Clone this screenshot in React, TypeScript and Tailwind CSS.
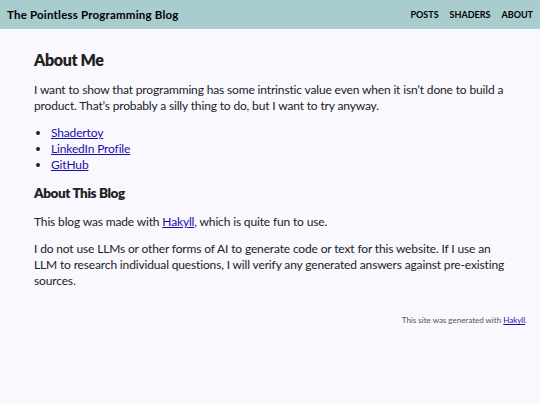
export default function App() {
  return (
    <div className="min-h-[405px] bg-[#f8f8fe] text-[#222] font-['Lato','Noto_Sans',sans-serif]">
      <header className="h-[29px] bg-[#a9cccf] flex items-center justify-between pl-[7px] pr-[7px]">
        <a href="/" className="text-[11.5px] font-bold text-black tracking-[0.2px]">
          The Pointless Programming Blog
        </a>
        <nav className="flex gap-[11px] text-[9px] font-bold text-black">
          <a href="/">POSTS</a>
          <a href="/">SHADERS</a>
          <a href="/">ABOUT</a>
        </nav>
      </header>

      <main className="px-[34px] pt-[20px] text-[12px] leading-[16px] tracking-[-0.15px]">
        <h1 className="text-[16px] font-extrabold leading-[22px] tracking-[-0.4px] mb-[11px]">About Me</h1>
        <p className="mb-[11px]">
          I want to show that programming has some intrinstic value even when it isn’t done to build a
          product. That’s probably a silly thing to do, but I want to try anyway.
        </p>
        <ul className="list-disc pl-[17px] mb-[10px]">
          <li><a href="/" className="text-[#1a0dab] underline">Shadertoy</a></li>
          <li><a href="/" className="text-[#1a0dab] underline">LinkedIn Profile</a></li>
          <li><a href="/" className="text-[#1a0dab] underline">GitHub</a></li>
        </ul>
        <h2 className="text-[13.5px] font-extrabold leading-[20px] tracking-[-0.4px] mb-[11px]">About This Blog</h2>
        <p className="mb-[11px]">
          This blog was made with <a href="/" className="text-[#1a0dab] underline">Hakyll</a>, which is quite fun to use.
        </p>
        <p>
          I do not use LLMs or other forms of AI to generate code or text for this website. If I use an
          LLM to research individual questions, I will verify any generated answers against pre-existing
          sources.
        </p>
        <footer className="text-right text-[8px] text-[#555] mt-[23px] -mr-[21px] tracking-normal">
          This site was generated with <a href="/" className="text-[#1a0dab] underline">Hakyll</a>.
        </footer>
      </main>
    </div>
  );
}
